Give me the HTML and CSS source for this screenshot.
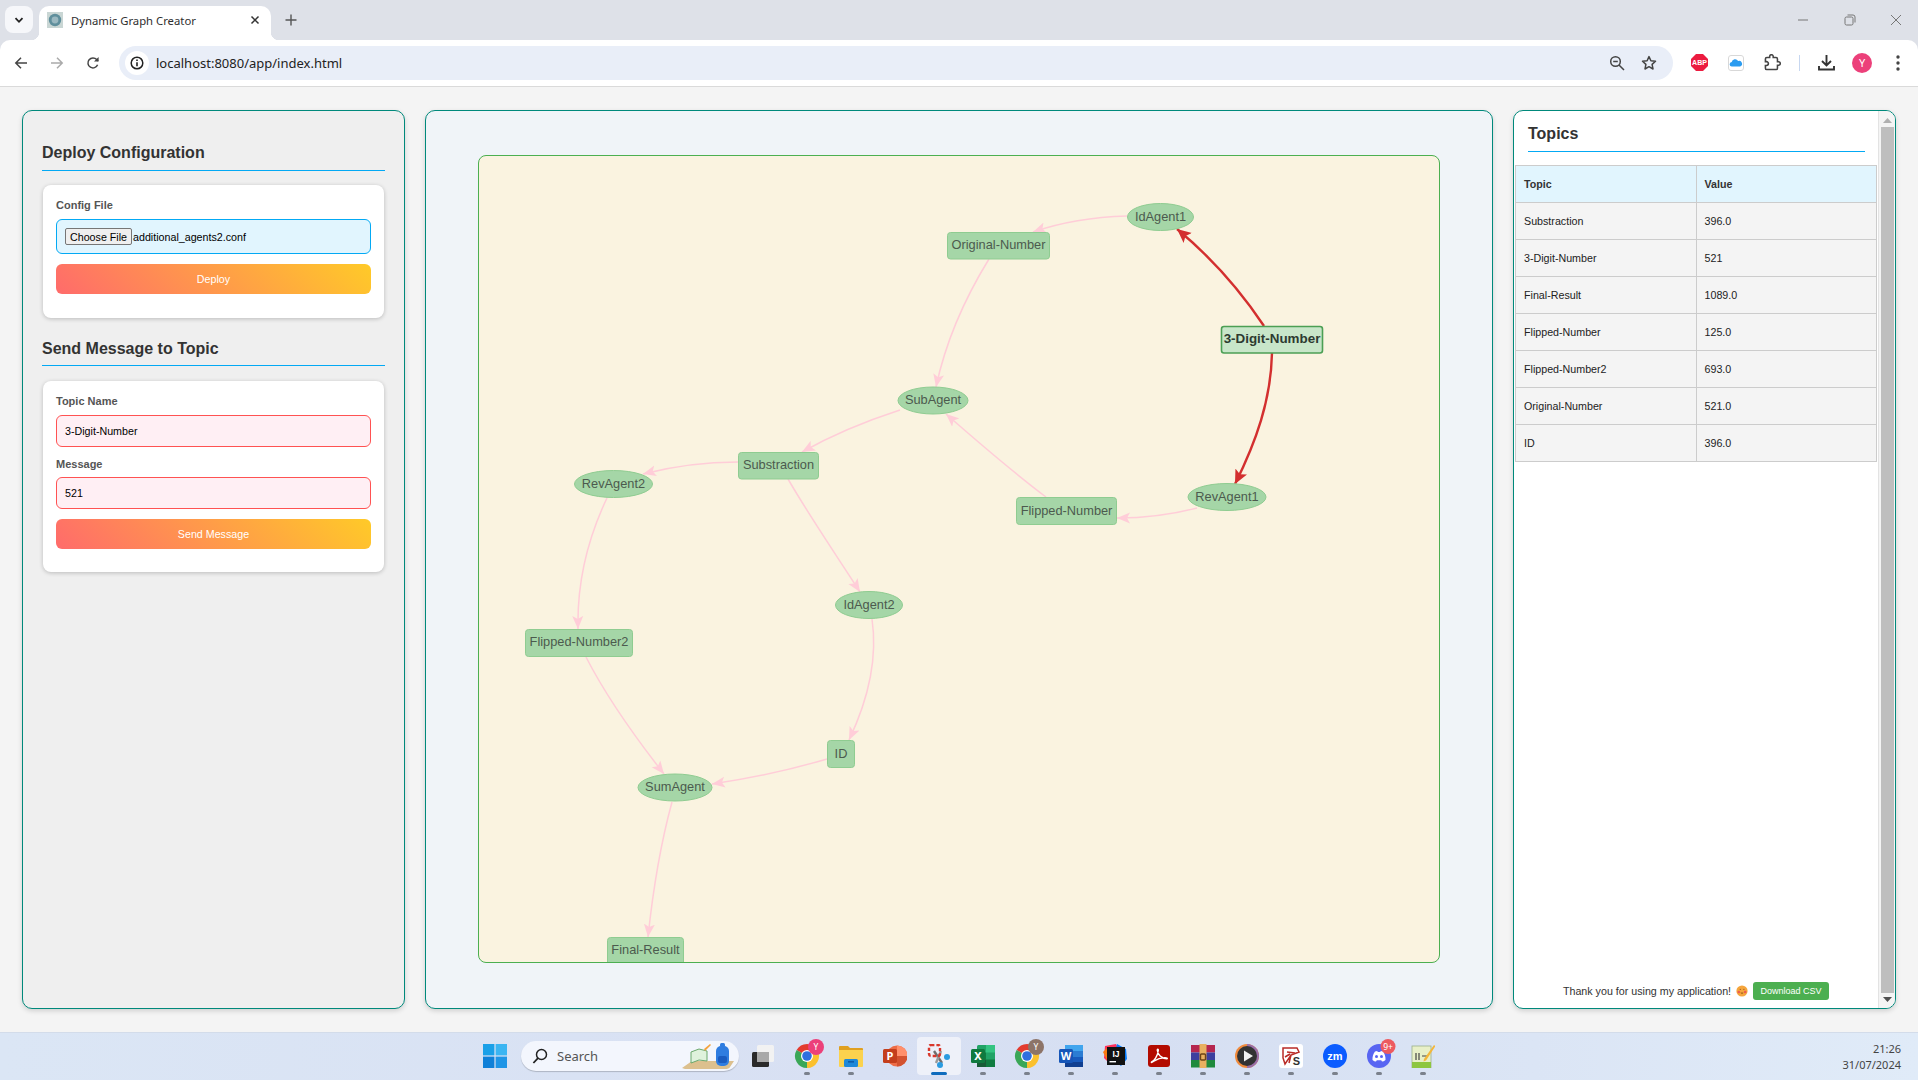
FILE: index.html
```html
<!DOCTYPE html>
<html lang="en">
<head>
    <meta charset="UTF-8">
    <meta name="viewport" content="width=device-width, initial-scale=1.0">
    <title>Dynamic Graph Creator</title>
    <link rel="stylesheet" href="styles.css">
</head>
<body>
    <!-- Browser frame -->
    <div class="browser">
        <header class="tab-strip">
            <div class="tab-menu">
                <svg width="10" height="10" viewBox="0 0 10 10"><path d="M1.500 3.200 5 6.800l3.500-3.600" fill="none" stroke="#222" stroke-width="1.800"/></svg>
            </div>
            <div class="tab">
                <svg class="favicon" width="16" height="16" viewBox="0 0 16 16"><rect width="16" height="16" fill="#c9d6d4"/><circle cx="8" cy="8" r="6.200" fill="#5f8f9c"/><circle cx="8" cy="8" r="3.400" fill="#9ab8c0"/></svg>
                <span class="tab-title">Dynamic Graph Creator</span>
                <svg width="10" height="10" viewBox="0 0 10 10"><path d="M1.500 1.500l7 7M8.500 1.500l-7 7" stroke="#333" stroke-width="1.500"/></svg>
            </div>
            <svg class="new-tab" width="12" height="12" viewBox="0 0 12 12"><path d="M6 .5v11M.5 6h11" stroke="#555" stroke-width="1.400"/></svg>
            <div class="window-controls">
                <svg width="12" height="12" viewBox="0 0 12 12"><path d="M1 6h10" stroke="#777"/></svg>
                <svg width="12" height="12" viewBox="0 0 12 12"><rect x="1" y="3" width="8" height="8" rx="1.500" fill="none" stroke="#777"/><path d="M3.500 1h5.500A2 2 0 0 1 11 3v5.500" fill="none" stroke="#777"/></svg>
                <svg width="12" height="12" viewBox="0 0 12 12"><path d="M1 1l10 10M11 1 1 11" stroke="#777"/></svg>
            </div>
        </header>

        <div class="toolbar">
            <div class="nav-buttons">
                <svg width="14" height="14" viewBox="0 0 14 14"><path d="M13 7H2M7 1.800 1.800 7 7 12.200" fill="none" stroke="#444" stroke-width="1.500"/></svg>
                <svg width="14" height="14" viewBox="0 0 14 14"><path d="M1 7h11M7 1.800 12.200 7 7 12.200" fill="none" stroke="#aaa" stroke-width="1.500"/></svg>
                <svg width="14" height="14" viewBox="0 0 14 14"><path d="M11.600 8.800A5 5 0 1 1 10.700 3.600L12 5" fill="none" stroke="#444" stroke-width="1.500"/><path d="M12.600 1v4.600H8z" fill="#444"/></svg>
            </div>
            <div class="omnibox">
                <span class="site-info">
                    <svg width="14" height="14" viewBox="0 0 14 14"><circle cx="7" cy="7" r="5.800" fill="none" stroke="#222" stroke-width="1.500"/><path d="M7 6.200v4M7 3.600v1.400" stroke="#222" stroke-width="1.600"/></svg>
                </span>
                <span class="url">localhost:8080/app/index.html</span>
                <svg class="omni-zoom" width="16" height="16" viewBox="0 0 16 16"><circle cx="6.500" cy="6.500" r="4.800" fill="none" stroke="#444" stroke-width="1.500"/><path d="M4.200 6.500h4.600M10 10l5 5" stroke="#444" stroke-width="1.500"/></svg>
                <svg width="16" height="16" viewBox="0 0 16 16"><path d="M8 1.600l1.900 4.200 4.600.5-3.400 3.100.9 4.600L8 11.700 4 14l.9-4.600L1.500 6.300l4.600-.5z" fill="none" stroke="#444" stroke-width="1.500" stroke-linejoin="round"/></svg>
            </div>
            <div class="toolbar-icons">
                <svg width="17" height="17" viewBox="0 0 17 17"><path d="M5 0h7l5 5v7l-5 5H5l-5-5V5z" fill="#ec1c40"/><text x="8.500" y="11.300" class="abp-text">ABP</text></svg>
                <svg width="16" height="16" viewBox="0 0 16 16"><rect x=".5" y=".5" width="15" height="15" rx="2.500" fill="#fff" stroke="#d8d8d8"/><path d="M4 11.500a2.200 2.200 0 0 1-.3-4.400 3.400 3.400 0 0 1 6.400-1 2.700 2.700 0 0 1 2.100 5.400z" fill="#2b9cf0"/></svg>
                <svg width="17" height="17" viewBox="0 0 24 24"><path d="M20.500 11H19V7c0-1.100-.9-2-2-2h-4V3.500a2.500 2.500 0 0 0-5 0V5H4a2 2 0 0 0-2 2v3.800h1.500a2.700 2.700 0 0 1 0 5.400H2V20c0 1.100.9 2 2 2h13a2 2 0 0 0 2-2v-4h1.500a2.500 2.500 0 0 0 0-5z" fill="none" stroke="#444" stroke-width="2.200"/></svg>
                <span class="toolbar-sep"></span>
                <svg width="17" height="17" viewBox="0 0 17 17"><path d="M8.500 1v10M4 7l4.500 4.500L13 7" fill="none" stroke="#333" stroke-width="1.900"/><path d="M1 12v3.500h15V12" fill="none" stroke="#333" stroke-width="1.900"/></svg>
                <span class="avatar">Y</span>
                <svg width="4" height="16" viewBox="0 0 4 16"><circle cx="2" cy="2" r="1.700" fill="#444"/><circle cx="2" cy="8" r="1.700" fill="#444"/><circle cx="2" cy="14" r="1.700" fill="#444"/></svg>
            </div>
        </div>
    </div>

    <!-- App -->
    <main class="page">
        <aside class="panel panel-left">
            <h2 class="section-title">Deploy Configuration</h2>
            <form class="card card-deploy">
                <label class="field-label">Config File</label>
                <div class="file-field">
                    <button type="button" class="file-button">Choose File</button>
                    <span class="file-name">additional_agents2.conf</span>
                </div>
                <button type="button" class="action-button">Deploy</button>
            </form>

            <h2 class="section-title section-title-second">Send Message to Topic</h2>
            <form class="card card-send">
                <label class="field-label">Topic Name</label>
                <input class="text-field" type="text" value="3-Digit-Number">
                <label class="field-label field-label-second">Message</label>
                <input class="text-field" type="text" value="521">
                <button type="button" class="action-button">Send Message</button>
            </form>
        </aside>

        <section class="panel panel-center">
            <div class="graph">
                <svg class="graph-svg" viewBox="479 156 960 806">
                    <defs>
                        <marker id="arrow-pink" markerUnits="userSpaceOnUse" markerWidth="14" markerHeight="12" refX="13" refY="6" orient="auto">
                            <path d="M0 .5 13 6 0 11.500 3 6z" fill="#ffcdd8"/>
                        </marker>
                        <marker id="arrow-red" markerUnits="userSpaceOnUse" markerWidth="15" markerHeight="14" refX="14" refY="7" orient="auto">
                            <path d="M0 .5 14 7 0 13.500 3 7z" fill="#d32f2f"/>
                        </marker>
                    </defs>

                    <g class="edges">
                        <path d="M1127 216C1092 217 1062 222 1033 232"/>
                        <path d="M989 259C965 298 946 340 936 387"/>
                        <path d="M1197 508C1170 515 1145 518 1117 518"/>
                        <path d="M1046 497C1010 470 978 442 946 414"/>
                        <path d="M900 410C866 421 834 434 802 452"/>
                        <path d="M738 462C705 462 674 466 643 474"/>
                        <path d="M607 498C587 540 577 583 578 629"/>
                        <path d="M788 479C810 517 835 553 860 592"/>
                        <path d="M872 619C878 660 868 700 849 740"/>
                        <path d="M586 657C608 700 635 737 664 774"/>
                        <path d="M827 759C790 770 752 778 712 784"/>
                        <path d="M672 802C660 846 653 890 648 937"/>
                    </g>
                    <g class="edges-active">
                        <path d="M1264 326C1240 290 1212 258 1177 229"/>
                        <path d="M1272 353C1271 400 1256 442 1235 484"/>
                    </g>

                    <g class="nodes">
                        <ellipse cx="1160.500" cy="217" rx="33" ry="13.500"/>
                        <text x="1160.500" y="216">IdAgent1</text>
                        <rect x="947.500" y="232.500" width="102" height="26.500" rx="3"/>
                        <text x="998.500" y="244">Original-Number</text>
                        <ellipse cx="933" cy="400.500" rx="35" ry="13.500"/>
                        <text x="933" y="399.500">SubAgent</text>
                        <ellipse cx="1227" cy="497" rx="39" ry="13.500"/>
                        <text x="1227" y="496">RevAgent1</text>
                        <rect x="1016.500" y="497.500" width="100" height="27" rx="3"/>
                        <text x="1066.500" y="510">Flipped-Number</text>
                        <rect x="738.500" y="452.500" width="80" height="26.500" rx="3"/>
                        <text x="778.500" y="464">Substraction</text>
                        <ellipse cx="613.500" cy="484" rx="39" ry="13.500"/>
                        <text x="613.500" y="483">RevAgent2</text>
                        <rect x="525.500" y="629.500" width="107" height="27" rx="3"/>
                        <text x="579" y="641.500">Flipped-Number2</text>
                        <ellipse cx="869" cy="605" rx="33.500" ry="13.500"/>
                        <text x="869" y="604.500">IdAgent2</text>
                        <rect x="827.500" y="740.500" width="27" height="27" rx="3"/>
                        <text x="841" y="753.500">ID</text>
                        <ellipse cx="675" cy="787.500" rx="37" ry="13.500"/>
                        <text x="675" y="786.500">SumAgent</text>
                        <rect x="607.500" y="937.500" width="76" height="40" rx="3"/>
                        <text x="645.500" y="949">Final-Result</text>
                    </g>
                    <g class="node-active">
                        <rect x="1221.500" y="326.500" width="101" height="26.500" rx="2.500"/>
                        <text x="1272" y="338">3-Digit-Number</text>
                    </g>
                </svg>
            </div>
        </section>

        <aside class="panel panel-right">
            <div class="topics">
                <h2 class="section-title topics-title">Topics</h2>
                <table class="topics-table">
                    <thead>
                        <tr><th>Topic</th><th>Value</th></tr>
                    </thead>
                    <tbody>
                        <tr><td>Substraction</td><td>396.0</td></tr>
                        <tr><td>3-Digit-Number</td><td>521</td></tr>
                        <tr><td>Final-Result</td><td>1089.0</td></tr>
                        <tr><td>Flipped-Number</td><td>125.0</td></tr>
                        <tr><td>Flipped-Number2</td><td>693.0</td></tr>
                        <tr><td>Original-Number</td><td>521.0</td></tr>
                        <tr><td>ID</td><td>396.0</td></tr>
                    </tbody>
                </table>
                <footer class="thanks">
                    <span>Thank you for using my application!</span>
                    <svg width="12" height="12" viewBox="0 0 12 12"><circle cx="6" cy="6" r="5.600" fill="#f5a53c"/><circle cx="2.800" cy="7" r="1.300" fill="#ee5a4f"/><circle cx="9.200" cy="7" r="1.300" fill="#ee5a4f"/><path d="M3.800 4.400h1M7.400 4.400h1M4.800 7.800q1.200 1 2.400 0" fill="none" stroke="#8a4a10" stroke-width=".9"/></svg>
                    <button type="button" class="csv-button">Download CSV</button>
                </footer>
            </div>
            <div class="scrollbar">
                <svg width="9" height="5" viewBox="0 0 9 5"><path d="M4.500 0 9 5H0z" fill="#b0b0b0"/></svg>
                <div class="scroll-thumb"></div>
                <svg width="9" height="5" viewBox="0 0 9 5"><path d="M0 0h9L4.500 5z" fill="#505050"/></svg>
            </div>
        </aside>
    </main>

    <!-- Windows taskbar -->
    <footer class="taskbar">
        <div class="task-item">
            <svg width="24" height="24" viewBox="0 0 24 24"><path d="M0 0h11.400v11.400H0z" fill="#1aa0e8"/><path d="M12.600 0H24v11.400H12.600z" fill="#3bb5f2"/><path d="M0 12.600h11.400V24H0z" fill="#0f80d8"/><path d="M12.600 12.600H24V24H12.600z" fill="#1f95e6"/></svg>
        </div>
        <div class="search-pill">
            <svg width="16" height="16" viewBox="0 0 16 16"><circle cx="9.500" cy="6.500" r="5" fill="none" stroke="#222" stroke-width="1.500"/><path d="M6 10.200 1.400 15" stroke="#222" stroke-width="1.800"/></svg>
            <span class="search-text">Search</span>
            <svg class="search-art" width="52" height="28" viewBox="0 0 52 28"><path d="M0 26 10 19h42l-4 6q-1 2-5 2H3z" fill="#dcc08e"/><path d="M9 10l8-3 8 2v10l-8-1-8 3z" fill="#dff2dc" stroke="#6aa86c"/><path d="M22 7l6-5 1 1-6 6z" fill="#f3a23c"/><rect x="34" y="4" width="13" height="20" rx="5" fill="#2f7de0"/><rect x="36" y="14" width="9" height="7" rx="2" fill="#1a5cc0"/><rect x="38" y="1" width="5" height="4" rx="1.500" fill="#2f7de0"/></svg>
        </div>
        <div class="task-item">
            <svg width="24" height="24" viewBox="0 0 24 24"><rect x="6" y="1" width="17" height="17" rx="1.500" fill="#f2f2f2"/><rect x="1" y="8" width="17" height="15" rx="1.500" fill="#2a2a2a"/><rect x="6" y="8" width="12" height="10" fill="#a9a9a9"/></svg>
        </div>
        <div class="task-item running">
            <svg width="24" height="24" viewBox="0 0 24 24" overflow="visible"><path d="M12 12 1.600 6A12 12 0 0 1 22.400 6z" fill="#e33b2e"/><path d="M12 12 22.400 6A12 12 0 0 1 12 24z" fill="#fbc02d"/><path d="M12 12V24A12 12 0 0 1 1.600 6z" fill="#3aa757"/><circle cx="12" cy="12" r="6" fill="#fff"/><circle cx="12" cy="12" r="4.800" fill="#2f6fe0"/><circle cx="21" cy="3" r="8" fill="#ec407a"/><text x="21" y="6" class="badge-text">Y</text></svg>
        </div>
        <div class="task-item running">
            <svg width="24" height="24" viewBox="0 0 24 24"><path d="M0 3q0-1 1-1h8l2 2h12q1 0 1 1v2H0z" fill="#e0a020"/><path d="M0 6h24v16q0 1-1 1H1q-1 0-1-1z" fill="#fbd24e"/><rect x="5" y="15" width="14" height="8" rx="1.500" fill="#1e88d8"/><rect x="9" y="17" width="6" height="1.600" fill="#0d5ca8"/></svg>
        </div>
        <div class="task-item">
            <svg width="24" height="24" viewBox="0 0 24 24"><circle cx="14" cy="12" r="10.500" fill="#ed6c47"/><path d="M14 12V1.500A10.500 10.500 0 0 1 24.500 12z" fill="#ff8f6b"/><path d="M14 12h10.500A10.500 10.500 0 0 1 14 22.500z" fill="#d35230"/><rect x="0" y="5" width="14" height="14" rx="1.500" fill="#c43e1c"/><text x="7" y="16.200" class="tile-text">P</text></svg>
        </div>
        <div class="task-item active">
            <svg width="24" height="24" viewBox="0 0 24 24"><path d="M7 7l8 12" stroke="#6f6f6f" stroke-width="2.400" fill="none"/><path d="M14 7 9 19" stroke="#9a9a9a" stroke-width="2.400" fill="none"/><rect x="2" y="1" width="11" height="11" rx="2" fill="none" stroke="#d9382c" stroke-width="2.400" stroke-dasharray="3.400 2"/><circle cx="20" cy="13" r="3" fill="#2a9be0"/><circle cx="13" cy="21" r="3" fill="#2a9be0"/></svg>
        </div>
        <div class="task-item running">
            <svg width="24" height="24" viewBox="0 0 24 24"><rect x="6" y="1" width="18" height="22" rx="1.500" fill="#21a366"/><rect x="15" y="1" width="9" height="7.500" fill="#33c481"/><rect x="15" y="15.500" width="9" height="7.500" fill="#107c41"/><rect x="6" y="8.500" width="9" height="7" fill="#107c41"/><rect x="6" y="15.500" width="9" height="7.500" fill="#185c37"/><rect x="0" y="5" width="14" height="14" rx="1.500" fill="#0f7a3f"/><text x="7" y="16.200" class="tile-text">X</text></svg>
        </div>
        <div class="task-item running">
            <svg width="24" height="24" viewBox="0 0 24 24" overflow="visible"><path d="M12 12 1.600 6A12 12 0 0 1 22.400 6z" fill="#e33b2e"/><path d="M12 12 22.400 6A12 12 0 0 1 12 24z" fill="#fbc02d"/><path d="M12 12V24A12 12 0 0 1 1.600 6z" fill="#3aa757"/><circle cx="12" cy="12" r="6" fill="#fff"/><circle cx="12" cy="12" r="4.800" fill="#2f6fe0"/><circle cx="21" cy="3" r="8" fill="#8d7468"/><text x="21" y="6" class="badge-text">Y</text></svg>
        </div>
        <div class="task-item running">
            <svg width="24" height="24" viewBox="0 0 24 24"><rect x="6" y="1" width="18" height="22" rx="1.500" fill="#2b7cd3"/><rect x="6" y="1" width="18" height="6" fill="#41a5ee"/><rect x="6" y="13" width="18" height="5" fill="#185abd"/><rect x="6" y="18" width="18" height="5" fill="#103f91"/><rect x="0" y="5" width="14" height="14" rx="1.500" fill="#1656b8"/><text x="7" y="16.200" class="tile-text">W</text></svg>
        </div>
        <div class="task-item running">
            <svg width="24" height="24" viewBox="0 0 24 24"><path d="M2 2 13 0l3 6-9 14-6-6z" fill="#fe315d"/><path d="M0 8l6-6 5 10-5 8z" fill="#f97a12"/><path d="M14 0l9 5 1 10-6 7-8-6z" fill="#087cfa"/><rect x="4" y="3" width="18" height="18" fill="#111"/><text x="13" y="12.600" class="ij-text">IJ</text><rect x="6.500" y="17" width="6.500" height="1.400" fill="#fff"/></svg>
        </div>
        <div class="task-item running">
            <svg width="24" height="24" viewBox="0 0 24 24"><rect width="22" height="22" x="1" y="1" rx="3" fill="#b30b00"/><path d="M4.500 18c3-1.200 6-6 6.800-11.500.2-1.800-1.200-1.800-1 0 .5 4 4 8 9.500 8.300 1.300 0-.2-1.300-2-1.200-3.500.2-8 1.700-11 3.600-1.500 1-3 1.800-2.300.8z" fill="none" stroke="#fff" stroke-width="1.400"/></svg>
        </div>
        <div class="task-item running">
            <svg width="24" height="24" viewBox="0 0 24 24"><rect y="1" width="24" height="7.500" fill="#b5264f"/><rect y="8.500" width="24" height="7.500" fill="#3d3f9e"/><rect y="16" width="24" height="7.500" fill="#1f8a3d"/><rect x="8.500" y="0" width="7" height="24" fill="#e8b060"/><rect x="9.500" y="10" width="5" height="6" rx="1" fill="none" stroke="#6b4316" stroke-width="1.400"/></svg>
        </div>
        <div class="task-item running">
            <svg width="24" height="24" viewBox="0 0 24 24"><circle cx="12" cy="12" r="12" fill="#f08a3c"/><path d="M12 0a12 12 0 0 1 0 24z" fill="#9a6fa8"/><circle cx="12" cy="12" r="10" fill="#333"/><path d="M9 6.500l9 5.500-9 5.500z" fill="#f2f2f2"/></svg>
        </div>
        <div class="task-item running">
            <svg width="24" height="24" viewBox="0 0 24 24"><rect width="24" height="24" rx="3" fill="#fff"/><path d="M4 4h14l2 4-8 3-6 9-2-6zM8 8l8 1M6 13l5-3M12 11l-2 8" fill="none" stroke="#b92b27" stroke-width="1.500"/><text x="17.500" y="21" class="ks-text">S</text></svg>
        </div>
        <div class="task-item running">
            <svg width="24" height="24" viewBox="0 0 24 24"><circle cx="12" cy="12" r="12" fill="#0b5cff"/><text x="12" y="15.500" class="zm-text">zm</text></svg>
        </div>
        <div class="task-item running">
            <svg width="24" height="24" viewBox="0 0 24 24" overflow="visible"><circle cx="12" cy="12" r="12" fill="#5865f2"/><path d="M5.500 16c-.2-3.500.8-6.500 2.500-8.500l2.200-.5.600 1h2.400l.6-1 2.200.5c1.700 2 2.700 5 2.500 8.500-1.200 1-2.400 1.500-3.500 1.500l-.8-1.300H9.800L9 17.500c-1.100 0-2.300-.5-3.500-1.500z" fill="#fff"/><circle cx="9.500" cy="12.500" r="1.500" fill="#5865f2"/><circle cx="14.500" cy="12.500" r="1.500" fill="#5865f2"/><circle cx="21" cy="2.500" r="7.500" fill="#ed5a5f"/><text x="21" y="5.500" class="badge-text">9+</text></svg>
        </div>
        <div class="task-item running">
            <svg width="24" height="24" viewBox="0 0 24 24"><rect x="1" y="2" width="19" height="22" fill="#e8f0c8" stroke="#9bb08a" stroke-width=".8"/><rect x="1" y="18" width="19" height="6" fill="#8dc63f"/><path d="M5 9v7M8 9v7M11 12h5" stroke="#444" stroke-width="1.200"/><path d="M13 15 23 1l1.500 1L15 16.500l-2.500 1z" fill="#f4b73a"/></svg>
        </div>
        <div class="clock">
            <span>21:26</span>
            <span>31/07/2024</span>
        </div>
    </footer>
</body>
</html>
```

FILE: styles.css
```css
* {
    box-sizing: border-box;
}

html, body {
    height: 100%;
}

body {
    margin: 0;
    display: flex;
    flex-direction: column;
    height: 1080px;
    overflow: hidden;
    font-family: "Liberation Sans", Arial, sans-serif;
    background-color: #f4f4f4;
    color: #333;
}

/* Browser frame */
.browser {
    flex: none;
    background-color: #dee1e8;
}

.tab-strip {
    height: 40px;
    display: flex;
    align-items: flex-end;
    padding-left: 5px;
}

.tab-menu {
    width: 28px;
    height: 27px;
    margin-bottom: 7px;
    border-radius: 8px;
    background-color: #f6f7fa;
    display: flex;
    align-items: center;
    justify-content: center;
}

.tab {
    position: relative;
    width: 232px;
    height: 34px;
    margin-left: 6px;
    padding: 0 11px 6px 8px;
    display: flex;
    align-items: center;
    background-color: #fff;
    border-radius: 10px 10px 0 0;
}

.tab::before, .tab::after {
    content: "";
    position: absolute;
    bottom: 0;
    width: 8px;
    height: 8px;
}

.tab::before {
    left: -8px;
    background: radial-gradient(circle at 0 0, #dee1e8 8px, #fff 8.5px);
}

.tab::after {
    right: -8px;
    background: radial-gradient(circle at 100% 0, #dee1e8 8px, #fff 8.5px);
}

.tab-title {
    flex: 1;
    margin-left: 8px;
    font-family: "Noto Sans", sans-serif;
    font-size: 11.3px;
    color: #2f2f2f;
}

.new-tab {
    margin: 0 0 14px 14px;
}

.window-controls {
    margin-left: auto;
    align-self: center;
    display: flex;
    gap: 34.5px;
    padding-right: 16px;
}

.toolbar {
    height: 47px;
    display: flex;
    align-items: center;
    padding: 0 0 1px 14px;
    background-color: #fff;
    border-bottom: 1px solid #dadada;
    border-radius: 10px 10px 0 0;
}

.nav-buttons {
    display: flex;
    gap: 22px;
    width: 105px;
}

.omnibox {
    width: 1554px;
    height: 34px;
    display: flex;
    align-items: center;
    padding: 0 16px 0 6px;
    background-color: #e9eef8;
    border-radius: 17px;
}

.site-info {
    width: 24px;
    height: 24px;
    display: flex;
    align-items: center;
    justify-content: center;
    border-radius: 50%;
    background-color: #fff;
}

.url {
    flex: 1;
    margin-left: 7px;
    font-family: "Noto Sans", sans-serif;
    font-size: 13px;
    color: #222;
}

.omni-zoom {
    margin-right: 16px;
}

.toolbar-icons {
    display: flex;
    align-items: center;
    margin-left: 18px;
    gap: 20px;
}

.toolbar-sep {
    width: 1px;
    height: 16px;
    margin: 0 -2px;
    background-color: #c7d7f0;
}

.avatar {
    width: 20px;
    height: 20px;
    margin: 0 4px 0 -3px;
    border-radius: 50%;
    background-color: #ec407a;
    color: #fff;
    font-family: "Noto Sans", sans-serif;
    font-size: 11px;
    line-height: 20px;
    text-align: center;
}

.abp-text {
    font-size: 7px;
    font-weight: bold;
    fill: #fff;
    text-anchor: middle;
}

/* Panels */
.page {
    flex: 1;
    display: flex;
    gap: 20px;
    padding: 23px 22px;
    min-height: 0;
}

.panel {
    border: 1px solid #00897b;
    border-radius: 10px;
    box-shadow: 0 2px 5px rgba(0, 0, 0, 0.15);
}

.panel-left {
    width: 383px;
    padding: 25px 19px 0;
    background-color: #efefef;
}

.panel-center {
    flex: 1;
    padding: 44px 52px 45px;
    background-color: #f0f4f8;
}

.panel-right {
    width: 383px;
    display: flex;
    background-color: #fff;
    overflow: hidden;
}

.section-title {
    margin: 0;
    height: 35px;
    font-size: 16px;
    font-weight: bold;
    line-height: 33px;
    color: #333;
    border-bottom: 1px solid #03a9f4;
}

.section-title-second {
    margin-top: 13px;
    line-height: 35px;
}

/* Forms */
.card {
    margin: 14px 1px 0;
    padding: 13px 13px 0;
    background-color: #fff;
    border-radius: 8px;
    box-shadow: 0 1px 4px rgba(0, 0, 0, 0.22);
}

.card-deploy {
    height: 133px;
}

.card-send {
    height: 191px;
    margin-top: 15px;
}

.field-label {
    display: block;
    height: 14px;
    font-size: 11px;
    font-weight: bold;
    line-height: 14px;
    color: #555;
}

.field-label-second {
    margin-top: 10px;
}

.file-field {
    height: 35px;
    margin-top: 7px;
    padding-left: 8px;
    display: flex;
    align-items: center;
    background-color: #e1f5fe;
    border: 1px solid #03a9f4;
    border-radius: 6px;
}

.file-button {
    height: 17px;
    padding: 0 4px;
    font-family: inherit;
    font-size: 10.7px;
    color: #000;
    background-color: #efefef;
    border: 1px solid #767676;
    border-radius: 2px;
}

.file-name {
    margin-left: 1px;
    font-size: 10.7px;
    color: #000;
}

.text-field {
    display: block;
    width: 100%;
    height: 32px;
    margin-top: 7px;
    padding: 0 8px;
    font-family: inherit;
    font-size: 10.7px;
    color: #000;
    background-color: #ffeff4;
    border: 1px solid #ff5252;
    border-radius: 6px;
    outline: none;
}

.field-label-second + .text-field {
    margin-top: 6px;
}

.action-button {
    display: block;
    width: 100%;
    height: 30px;
    margin-top: 10px;
    padding: 0;
    font-family: inherit;
    font-size: 10.7px;
    color: #fff;
    background: linear-gradient(45deg, #ff6b6b, #ffca28);
    border: none;
    border-radius: 6px;
}

/* Graph */
.graph {
    height: 100%;
    background-color: #faf3e0;
    border: 1px solid #4caf50;
    border-radius: 8px;
    overflow: hidden;
}

.graph-svg {
    display: block;
    width: 960px;
    height: 806px;
}

.edges path {
    fill: none;
    stroke: #ffcdd8;
    stroke-width: 1.500;
    marker-end: url(#arrow-pink);
}

.edges-active path {
    fill: none;
    stroke: #d32f2f;
    stroke-width: 2.400;
    marker-end: url(#arrow-red);
}

.nodes ellipse, .nodes rect {
    fill: #a5d6a7;
    stroke: #8fcc91;
    stroke-width: 1;
}

.nodes text, .node-active text {
    font-size: 12.8px;
    text-anchor: middle;
    dominant-baseline: central;
    fill: #4c5a4e;
}

.node-active rect {
    fill: #c8e6c9;
    stroke: #4c9f54;
    stroke-width: 1.600;
}

.node-active text {
    font-size: 13.4px;
    font-weight: bold;
    fill: #2d3a30;
}

/* Topics table */
.topics {
    flex: 1;
    display: flex;
    flex-direction: column;
    min-width: 0;
}

.topics-title {
    flex: none;
    margin: 7px 13px 13px 14px;
    height: 34px;
    line-height: 31px;
}

.topics-table {
    width: 362px;
    margin-left: 1px;
    border-collapse: collapse;
    table-layout: fixed;
    font-size: 10.7px;
    color: #222;
}

.topics-table th, .topics-table td {
    height: 37px;
    padding: 0 8px;
    text-align: left;
    border: 1px solid #ccc;
}

.topics-table th {
    background-color: #e1f5fe;
    color: #333;
    font-weight: bold;
}

.topics-table td {
    background-color: #f4f4f4;
}

.thanks {
    margin-top: auto;
    height: 18px;
    margin-bottom: 8px;
    display: flex;
    align-items: center;
    justify-content: center;
    gap: 5px;
    font-size: 10.7px;
    color: #333;
}

.csv-button {
    width: 76px;
    height: 18px;
    padding: 0;
    font-family: inherit;
    font-size: 9px;
    color: #fff;
    background-color: #4caf50;
    border: none;
    border-radius: 3px;
}

.scrollbar {
    width: 17px;
    flex: none;
    display: flex;
    flex-direction: column;
    align-items: center;
    padding: 7px 0 6px;
    background-color: #f4f4f4;
    border-left: 1px solid #e3e3e3;
}

.scroll-thumb {
    flex: 1;
    width: 13px;
    margin: 4px 0;
    background-color: #bebebe;
}

/* Taskbar */
.taskbar {
    height: 48px;
    flex: none;
    display: flex;
    align-items: center;
    padding: 0 17px 1px 473px;
    background: linear-gradient(90deg, #dbe6f5, #d8e0f3 45%, #d6dff2 60%, #e0ebf8);
    border-top: 1px solid #d3dcea;
}

.task-item {
    position: relative;
    width: 44px;
    height: 38px;
    display: flex;
    align-items: center;
    justify-content: center;
    border-radius: 4px;
}

.task-item.running::after, .task-item.active::after {
    content: "";
    position: absolute;
    left: 19px;
    bottom: 0;
    width: 6px;
    height: 3px;
    border-radius: 2px;
    background-color: #7b818c;
}

.task-item.active {
    background-color: #eef1f9;
}

.task-item.active::after {
    left: 14px;
    width: 16px;
    background-color: #0f6cbd;
}

.search-pill {
    width: 218px;
    height: 30px;
    margin: 0 2px 0 4px;
    padding: 0 6px 0 11px;
    display: flex;
    align-items: center;
    background-color: #f3f6fd;
    border-radius: 15px;
    box-shadow: 0 1px 1px rgba(0, 0, 0, 0.2);
}

.search-text {
    flex: 1;
    margin-left: 9px;
    font-family: "Noto Sans", sans-serif;
    font-size: 13px;
    color: #555;
}

.search-art {
    margin-right: -1px;
}

.badge-text {
    font-family: "Noto Sans", sans-serif;
    font-size: 8.5px;
    fill: #fff;
    text-anchor: middle;
}

.tile-text {
    font-family: "Noto Sans", sans-serif;
    font-size: 11px;
    font-weight: bold;
    fill: #fff;
    text-anchor: middle;
}

.ij-text {
    font-size: 8.5px;
    font-weight: bold;
    fill: #fff;
    text-anchor: middle;
}

.ks-text {
    font-size: 11px;
    font-weight: bold;
    fill: #333;
    text-anchor: middle;
}

.zm-text {
    font-size: 11px;
    font-weight: bold;
    fill: #fff;
    text-anchor: middle;
}

.clock {
    margin-left: auto;
    display: flex;
    flex-direction: column;
    align-items: flex-end;
    gap: 3px;
    font-family: "Noto Sans", sans-serif;
    font-size: 11px;
    line-height: 13px;
    color: #444;
}
```
